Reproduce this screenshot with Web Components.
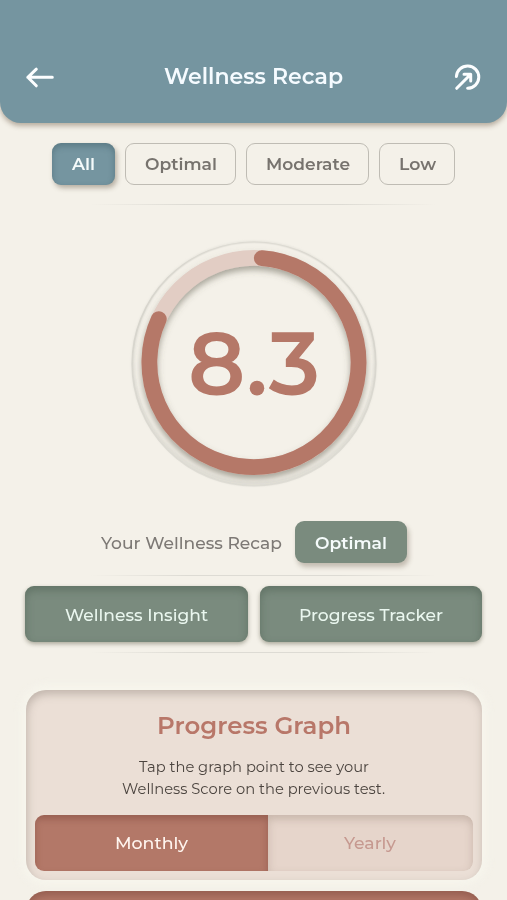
<!DOCTYPE html>
<html lang="en">
<head>
<meta charset="utf-8">
<title>Wellness Recap</title>
<style>
  html, body {
    margin: 0;
    height: 900px;
    overflow: hidden;
  }

  body {
    background: #f4f1e9;
    font-family: Montserrat, Inter, sans-serif;
  }
</style>
</head>
<body>
<wellness-app></wellness-app>

<script>
// Single line label stretched to a fixed width
class FitLabel extends HTMLElement {
  constructor() {
    super();
    this.attachShadow({ mode: "open" });
    this.shadowRoot.innerHTML = `
      <style>
        :host {
          display: block;
          flex: none;
          white-space: nowrap;
        }

        span {
          display: inline-block;
          transform-origin: 0 50%;
        }
      </style>
      <span><slot></slot></span>
    `;
  }

  connectedCallback() {
    const width = Number(this.getAttribute("width"));
    const span = this.shadowRoot.querySelector("span");
    this.style.width = `${width}px`;
    span.style.transform = `scaleX(${width / span.getBoundingClientRect().width})`;
  }
}

class AppHeader extends HTMLElement {
  constructor() {
    super();
    this.attachShadow({ mode: "open" });
    this.shadowRoot.innerHTML = `
      <style>
        :host {
          display: flex;
          justify-content: space-between;
          align-items: flex-end;
          box-sizing: border-box;
          height: 123px;
          padding: 0 25px 30px;
          border-radius: 0 0 21px 21px;
          background: #7595a0;
          box-shadow: 0 3px 5px rgba(100, 80, 60, 0.42);
          color: #f5fbff;
          font-size: 22px;
          font-weight: 600;
        }

        svg {
          display: block;
          width: 30px;
          height: 32px;
          fill: none;
          stroke: #fcfeff;
          stroke-width: 3;
          stroke-linecap: round;
          stroke-linejoin: round;
        }

        .title {
          line-height: 32px;
        }
      </style>
      <svg viewBox="0 0 30 32"><path d="M27.3 16.3H2.8M11.3 8.2L2.8 16.3L11.3 24.8"/></svg>
      <div class="title"><slot></slot></div>
      <svg viewBox="0 0 30 32">
        <path d="M4.4 15.5A11.2 11.2 0 1 1 15.6 27.3"/>
        <path d="M4.7 27.3L18.2 13.8M12 13.3H18.7V20"/>
      </svg>
    `;
  }
}

class FilterChip extends HTMLElement {
  constructor() {
    super();
    this.attachShadow({ mode: "open" });
    this.shadowRoot.innerHTML = `
      <style>
        :host {
          display: flex;
          justify-content: center;
          align-items: center;
          box-sizing: border-box;
          height: 42px;
          padding: 0 18.5px;
          border: 1.4px solid #bfbcb4;
          border-radius: 9px;
          color: #77736e;
          font-size: 17.3px;
          font-weight: 600;
        }

        :host([tone]) {
          border: 0;
          padding: 0 20px;
          color: #f5fbfb;
        }

        :host([tone="blue"]) {
          background: #7595a0;
          box-shadow: 2px 3px 5px rgba(90, 75, 55, 0.4), inset 0 3px 6px rgba(50, 80, 90, 0.4);
        }

        :host([tone="green"]) {
          background: #7a8b7e;
          box-shadow: 2px 4px 5px rgba(90, 75, 55, 0.32);
        }
      </style>
      <slot></slot>
    `;
  }
}

class SoftDivider extends HTMLElement {
  constructor() {
    super();
    this.attachShadow({ mode: "open" });
    this.shadowRoot.innerHTML = `
      <style>
        :host {
          display: block;
          height: 1px;
          margin: 0 70px 0 90px;
          background: linear-gradient(90deg, transparent, #dddbd4 28%, #dddbd4 72%, transparent);
        }
      </style>
    `;
  }
}

class ScoreRing extends HTMLElement {
  constructor() {
    super();
    this.attachShadow({ mode: "open" });
    this.shadowRoot.innerHTML = `
      <style>
        :host {
          display: grid;
          place-items: center;
          width: 260px;
          height: 260px;
          color: #b57868;
          font-size: 88px;
          font-weight: 600;
          line-height: 1;
          font-feature-settings: "cv09";
        }

        svg, .score {
          grid-area: 1 / 1;
        }
      </style>
      <svg width="260" height="260" viewBox="0 0 260 260" fill="none">
        <defs>
          <filter id="soft" x="-10%" y="-10%" width="120%" height="120%">
            <feGaussianBlur stdDeviation="1.2"/>
          </filter>
          <filter id="drop" x="-10%" y="-10%" width="120%" height="120%">
            <feDropShadow dx="0" dy="4" stdDeviation="3" flood-color="#5c5848" flood-opacity="0.5"/>
          </filter>
          <linearGradient id="rim" x1="0" y1="0" x2="0" y2="1">
            <stop offset="0" stop-color="#d1cfc7"/>
            <stop offset="1" stop-color="#e0ded6"/>
          </linearGradient>
        </defs>
        <circle cx="130" cy="129.5" r="120.5" stroke="#e2e0d8" stroke-width="4" filter="url(#soft)"/>
        <circle cx="130" cy="130" r="121.7" stroke="url(#rim)" stroke-width="1.8"/>
        <circle cx="130" cy="127.5" r="117" stroke="#f4f1e9" stroke-width="4" filter="url(#soft)"/>
        <g filter="url(#drop)">
          <circle cx="130" cy="128.5" r="104.6" stroke="#e2cdc4" stroke-width="15.6"/>
          <path d="M137.8 24.2A104.6 104.6 0 1 1 34.8 85.1" stroke="#b57868" stroke-width="15.8" stroke-linecap="round"/>
        </g>
      </svg>
      <div class="score"><slot></slot></div>
    `;
  }
}

class ActionButton extends HTMLElement {
  constructor() {
    super();
    this.attachShadow({ mode: "open" });
    this.shadowRoot.innerHTML = `
      <style>
        :host {
          display: flex;
          flex: 1;
          justify-content: center;
          align-items: center;
          height: 56px;
          border-radius: 9px;
          background: #7a8b7e;
          box-shadow: 0 2px 4px rgba(80, 80, 60, 0.45), inset 0 4px 8px rgba(65, 85, 70, 0.44);
          color: #eaf7ef;
          font-size: 17.3px;
          font-weight: 500;
        }
      </style>
      <slot></slot>
    `;
  }
}

class SegmentSwitch extends HTMLElement {
  constructor() {
    super();
    this.attachShadow({ mode: "open" });
    this.shadowRoot.innerHTML = `
      <style>
        :host {
          display: grid;
          grid-template-columns: 233px 1fr;
          height: 56px;
          border-radius: 9px;
          overflow: hidden;
          font-size: 17.3px;
          font-weight: 500;
        }

        div {
          display: flex;
          justify-content: center;
          align-items: center;
        }

        .on {
          background: #b37868;
          box-shadow: inset 0 4px 7px rgba(100, 50, 40, 0.35);
          color: #fff5ef;
        }

        .off {
          border-radius: 0 9px 9px 0;
          background: #e6d5cb;
          box-shadow: inset 0 4px 8px rgba(130, 110, 95, 0.3);
          color: #c69990;
        }
      </style>
      <div class="on"><slot name="on"></slot></div>
      <div class="off"><slot name="off"></slot></div>
    `;
  }
}

class GraphCard extends HTMLElement {
  constructor() {
    super();
    this.attachShadow({ mode: "open" });
    this.shadowRoot.innerHTML = `
      <style>
        :host {
          display: flex;
          flex-direction: column;
          box-sizing: border-box;
          height: 190px;
          padding: 20px 9.5px 9.5px;
          border-radius: 20px;
          background: #ebdfd6;
          box-shadow: 0 0 8px 5px rgba(248, 246, 238, 0.8), inset 1px 4px 8px rgba(110, 100, 90, 0.34);
        }

        .title {
          display: flex;
          justify-content: center;
          color: #b87769;
          font-size: 24.5px;
          font-weight: 600;
          line-height: 31px;
        }

        .hint {
          display: flex;
          flex-direction: column;
          align-items: center;
          flex: 1;
          padding-top: 15px;
          color: #4b443f;
          font-size: 15.2px;
          line-height: 22px;
        }
      </style>
      <div class="title"><slot name="title"></slot></div>
      <div class="hint"><slot name="hint"></slot></div>
      <slot></slot>
    `;
  }
}

class ChartPanel extends HTMLElement {
  constructor() {
    super();
    this.attachShadow({ mode: "open" });
    this.shadowRoot.innerHTML = `
      <style>
        :host {
          display: block;
          height: 200px;
          border-radius: 20px;
          background: #b37868;
          box-shadow: inset 0 4px 8px rgba(100, 50, 40, 0.4);
        }
      </style>
    `;
  }
}

class WellnessApp extends HTMLElement {
  constructor() {
    super();
    this.attachShadow({ mode: "open" });
    this.shadowRoot.innerHTML = `
      <style>
        :host {
          display: block;
          width: 507px;
          height: 900px;
          overflow: hidden;
        }

        .filters {
          display: flex;
          justify-content: center;
          gap: 10px;
          padding: 19.5px 0;
        }

        .ring {
          display: flex;
          justify-content: center;
          padding: 29px 0 27px;
        }

        .status {
          display: flex;
          justify-content: center;
          align-items: center;
          gap: 13px;
          padding: 0 0 12px 1px;
          color: #7d7975;
          font-size: 17.3px;
          font-weight: 500;
        }

        .actions {
          display: flex;
          gap: 12px;
          padding: 10px 25px;
        }

        .cards {
          display: flex;
          flex-direction: column;
          gap: 11px;
          padding: 37px 25px 0 25.5px;
        }
      </style>

      <app-header><fit-label width="179">Wellness Recap</fit-label></app-header>

      <div class="filters">
        <filter-chip tone="blue"><fit-label width="23">All</fit-label></filter-chip>
        <filter-chip><fit-label width="72">Optimal</fit-label></filter-chip>
        <filter-chip><fit-label width="84">Moderate</fit-label></filter-chip>
        <filter-chip><fit-label width="37">Low</fit-label></filter-chip>
      </div>
      <soft-divider></soft-divider>

      <div class="ring">
        <score-ring><fit-label width="132">8.3</fit-label></score-ring>
      </div>

      <div class="status">
        <fit-label width="181">Your Wellness Recap</fit-label>
        <filter-chip tone="green"><fit-label width="72">Optimal</fit-label></filter-chip>
      </div>
      <soft-divider></soft-divider>

      <div class="actions">
        <action-button><fit-label width="143">Wellness Insight</fit-label></action-button>
        <action-button><fit-label width="144">Progress Tracker</fit-label></action-button>
      </div>
      <soft-divider></soft-divider>

      <div class="cards">
        <graph-card>
          <fit-label slot="title" width="194">Progress Graph</fit-label>
          <fit-label slot="hint" width="230">Tap the graph point to see your</fit-label>
          <fit-label slot="hint" width="263">Wellness Score on the previous test.</fit-label>
          <segment-switch>
            <fit-label slot="on" width="73">Monthly</fit-label>
            <fit-label slot="off" width="52">Yearly</fit-label>
          </segment-switch>
        </graph-card>
        <chart-panel></chart-panel>
      </div>
    `;
  }
}

// containers first, so labels are measured with their final fonts
customElements.define("app-header", AppHeader);
customElements.define("filter-chip", FilterChip);
customElements.define("soft-divider", SoftDivider);
customElements.define("score-ring", ScoreRing);
customElements.define("action-button", ActionButton);
customElements.define("segment-switch", SegmentSwitch);
customElements.define("graph-card", GraphCard);
customElements.define("chart-panel", ChartPanel);
customElements.define("wellness-app", WellnessApp);
customElements.define("fit-label", FitLabel);
</script>
</body>
</html>
